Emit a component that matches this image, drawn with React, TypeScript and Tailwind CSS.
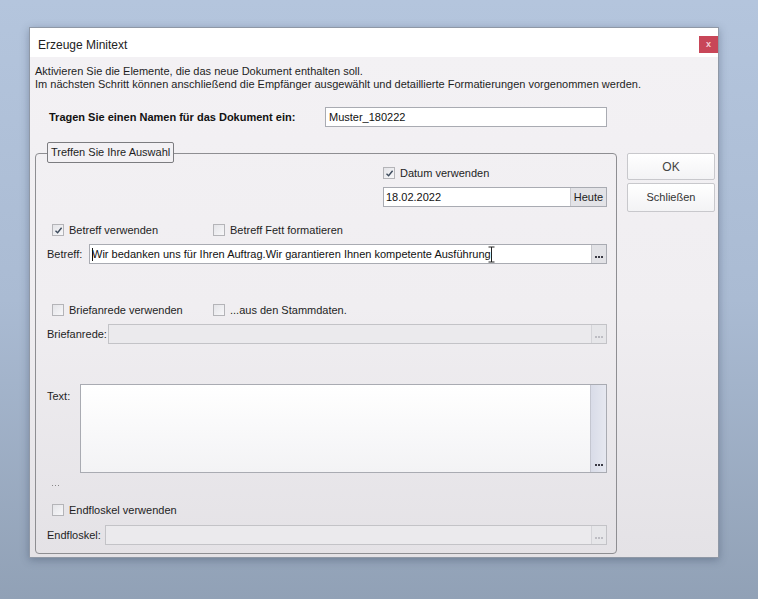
import type { ReactNode } from 'react'

const FONT = { fontFamily: '"Liberation Sans", Arial, sans-serif' }

function Dots({ color }: { color: string }) {
  return (
    <span className="flex gap-[1px]">
      <span className={`w-[2px] h-[2px] ${color}`} />
      <span className={`w-[2px] h-[2px] ${color}`} />
      <span className={`w-[2px] h-[2px] ${color}`} />
    </span>
  )
}

function CheckBox({ checked = false, label }: { checked?: boolean; label: string }) {
  return (
    <div className="flex items-center h-[16px]">
      <span className="w-[12px] h-[12px] border border-[#b4b4b8] bg-gradient-to-br from-[#e4e4e8] to-[#f7f7f9] flex items-center justify-center">
        {checked && (
          <svg width="9" height="9" viewBox="0 0 9 9">
            <path d="M1.5 4.8 L3.6 6.8 L7.6 1.8" fill="none" stroke="#3c4a5c" strokeWidth="1.4" />
          </svg>
        )}
      </span>
      <span className="ml-[5px] text-[11px] text-[#1e1e1e]">{label}</span>
    </div>
  )
}

function Field({
  label,
  labelWidth,
  value,
  disabled = false,
  children,
}: {
  label: string
  labelWidth: string
  value?: string
  disabled?: boolean
  children?: ReactNode
}) {
  return (
    <div className="flex items-center h-[20px]">
      <span className={`${labelWidth} text-[11px] text-[#1e1e1e] shrink-0`}>{label}</span>
      <div
        className={`flex-1 h-[20px] flex border ${
          disabled ? 'bg-[#ebeaed] border-[#c3c3c7]' : 'bg-white border-[#a9abb2]'
        }`}
      >
        <div className="relative flex-1 flex items-center pl-[2px] text-[11px] text-[#111] whitespace-nowrap overflow-hidden">
          {value}
          {children}
        </div>
        <span
          className={`w-[15px] flex items-end justify-center pb-[5px] border-l ${
            disabled ? 'bg-[#e6e6e9] border-[#d4d4d8]' : 'bg-[#e2e2e6] border-[#c7c7cc]'
          }`}
        >
          <Dots color={disabled ? 'bg-[#bdbdc3]' : 'bg-[#3b3b45]'} />
        </span>
      </div>
    </div>
  )
}

export default function App() {
  return (
    <div
      className="w-[758px] h-[599px] bg-gradient-to-b from-[#b4c5dd] via-[#aabbd3] to-[#91a1b6] pt-[27px] pl-[29px]"
      style={FONT}
    >
      <div className="w-[690px] h-[531px] flex flex-col border border-[#8f98a6] shadow-[0_2px_8px_rgba(40,55,80,0.35)]">
        {/* title bar */}
        <div className="h-[29px] bg-white flex items-start shrink-0">
          <span className="mt-[8px] ml-[8px] text-[12px] text-[#222]">Erzeuge Minitext</span>
          <span className="ml-auto mt-[8px] mr-[0px] w-[19px] h-[17px] bg-[#c84658] flex items-center justify-center text-[9px] font-bold text-[#f4d0d6]">
            x
          </span>
        </div>

        {/* body */}
        <div className="flex-1 bg-gradient-to-b from-[#f3f1f4] via-[#f0eef1] to-[#e4e2e6] pl-[5px] pr-[3px] flex flex-col">
          <div className="mt-[8px] text-[11px] leading-[13px] text-[#1e1e1e]">
            <p>Aktivieren Sie die Elemente, die das neue Dokument enthalten soll.</p>
            <p>Im nächsten Schritt können anschließend die Empfänger ausgewählt und detaillierte Formatierungen vorgenommen werden.</p>
          </div>

          <div className="mt-[16px] flex items-center h-[20px]">
            <span className="ml-[14px] w-[276px] text-[11px] font-bold text-[#111]">
              Tragen Sie einen Namen für das Dokument ein:
            </span>
            <div className="w-[282px] h-[20px] bg-white border border-[#a9abb2] flex items-center pl-[3px] text-[11px] text-[#111]">
              Muster_180222
            </div>
          </div>

          <div className="mt-[26px] flex items-start">
            {/* group box */}
            <div className="relative w-[582px] h-[401px] border border-[#8e8e92] rounded-[4px] pl-[11px] pr-[9px] flex flex-col">
              <span className="absolute -top-[12px] left-[11px] h-[21px] px-[3px] flex items-center border border-[#7c7c80] rounded-[2px] bg-[#f3f1f4] text-[11px] text-[#1e1e1e]">
                Treffen Sie Ihre Auswahl
              </span>

              <div className="mt-[11px] ml-[336px]">
                <CheckBox checked label="Datum verwenden" />
              </div>
              <div className="mt-[6px] ml-[336px] h-[20px] flex bg-white border border-[#a9abb2]">
                <span className="flex-1 flex items-center pl-[2px] text-[11px] text-[#111]">18.02.2022</span>
                <span className="w-[36px] flex items-center justify-center bg-[#e3e3e7] border-l border-[#c9c9ce] text-[11px] text-[#222]">
                  Heute
                </span>
              </div>

              <div className="mt-[15px] flex items-center">
                <div className="ml-[5px] w-[161px]">
                  <CheckBox checked label="Betreff verwenden" />
                </div>
                <CheckBox label="Betreff Fett formatieren" />
              </div>
              <div className="mt-[6px]">
                <Field
                  label="Betreff:"
                  labelWidth="w-[42px]"
                  value="Wir bedanken uns für Ihren Auftrag.Wir garantieren Ihnen kompetente Ausführung"
                >
                  <span className="absolute left-[2px] top-[3px] w-px h-[13px] bg-[#111]" />
                  <svg className="-ml-[3px]" width="7" height="17" viewBox="0 0 7 17">
                    <path d="M0.5 1 H6.5 M3.5 1 V16 M0.5 16 H6.5" fill="none" stroke="#222" strokeWidth="1" />
                  </svg>
                </Field>
              </div>

              <div className="mt-[38px] flex items-center">
                <div className="ml-[5px] w-[161px]">
                  <CheckBox label="Briefanrede verwenden" />
                </div>
                <CheckBox label="...aus den Stammdaten." />
              </div>
              <div className="mt-[6px]">
                <Field label="Briefanrede:" labelWidth="w-[61px]" disabled />
              </div>

              <div className="mt-[40px] flex items-start h-[89px]">
                <span className="w-[33px] mt-[4px] text-[11px] text-[#1e1e1e]">Text:</span>
                <div className="flex-1 h-[89px] flex border border-[#a9abb2] bg-gradient-to-b from-white to-[#f3f3f5]">
                  <div className="flex-1" />
                  <span className="w-[16px] flex items-end justify-center pb-[6px] bg-gradient-to-r from-[#d9dce8] to-[#e6e8f0] border-l border-[#c4c6d0]">
                    <Dots color="bg-[#3b3b45]" />
                  </span>
                </div>
              </div>

              <div className="mt-[8px] h-[8px] ml-[5px] flex items-center">
                <span className="flex gap-[2px]">
                  <span className="w-px h-px bg-[#888]" />
                  <span className="w-px h-px bg-[#888]" />
                  <span className="w-px h-px bg-[#888]" />
                </span>
              </div>

              <div className="mt-[13px] ml-[5px]">
                <CheckBox label="Endfloskel verwenden" />
              </div>
              <div className="mt-[7px]">
                <Field label="Endfloskel:" labelWidth="w-[58px]" disabled />
              </div>
            </div>

            {/* buttons */}
            <div className="ml-[10px] flex flex-col gap-[3px]">
              <button className="w-[88px] h-[27px] border border-[#c8c8cc] rounded-[2px] bg-gradient-to-b from-white to-[#f3f3f5] text-[12px] text-[#444]">
                OK
              </button>
              <button className="w-[88px] h-[29px] border border-[#c8c8cc] rounded-[2px] bg-gradient-to-b from-white to-[#f3f3f5] text-[11px] text-[#333]">
                Schließen
              </button>
            </div>
          </div>
        </div>
      </div>
    </div>
  )
}
